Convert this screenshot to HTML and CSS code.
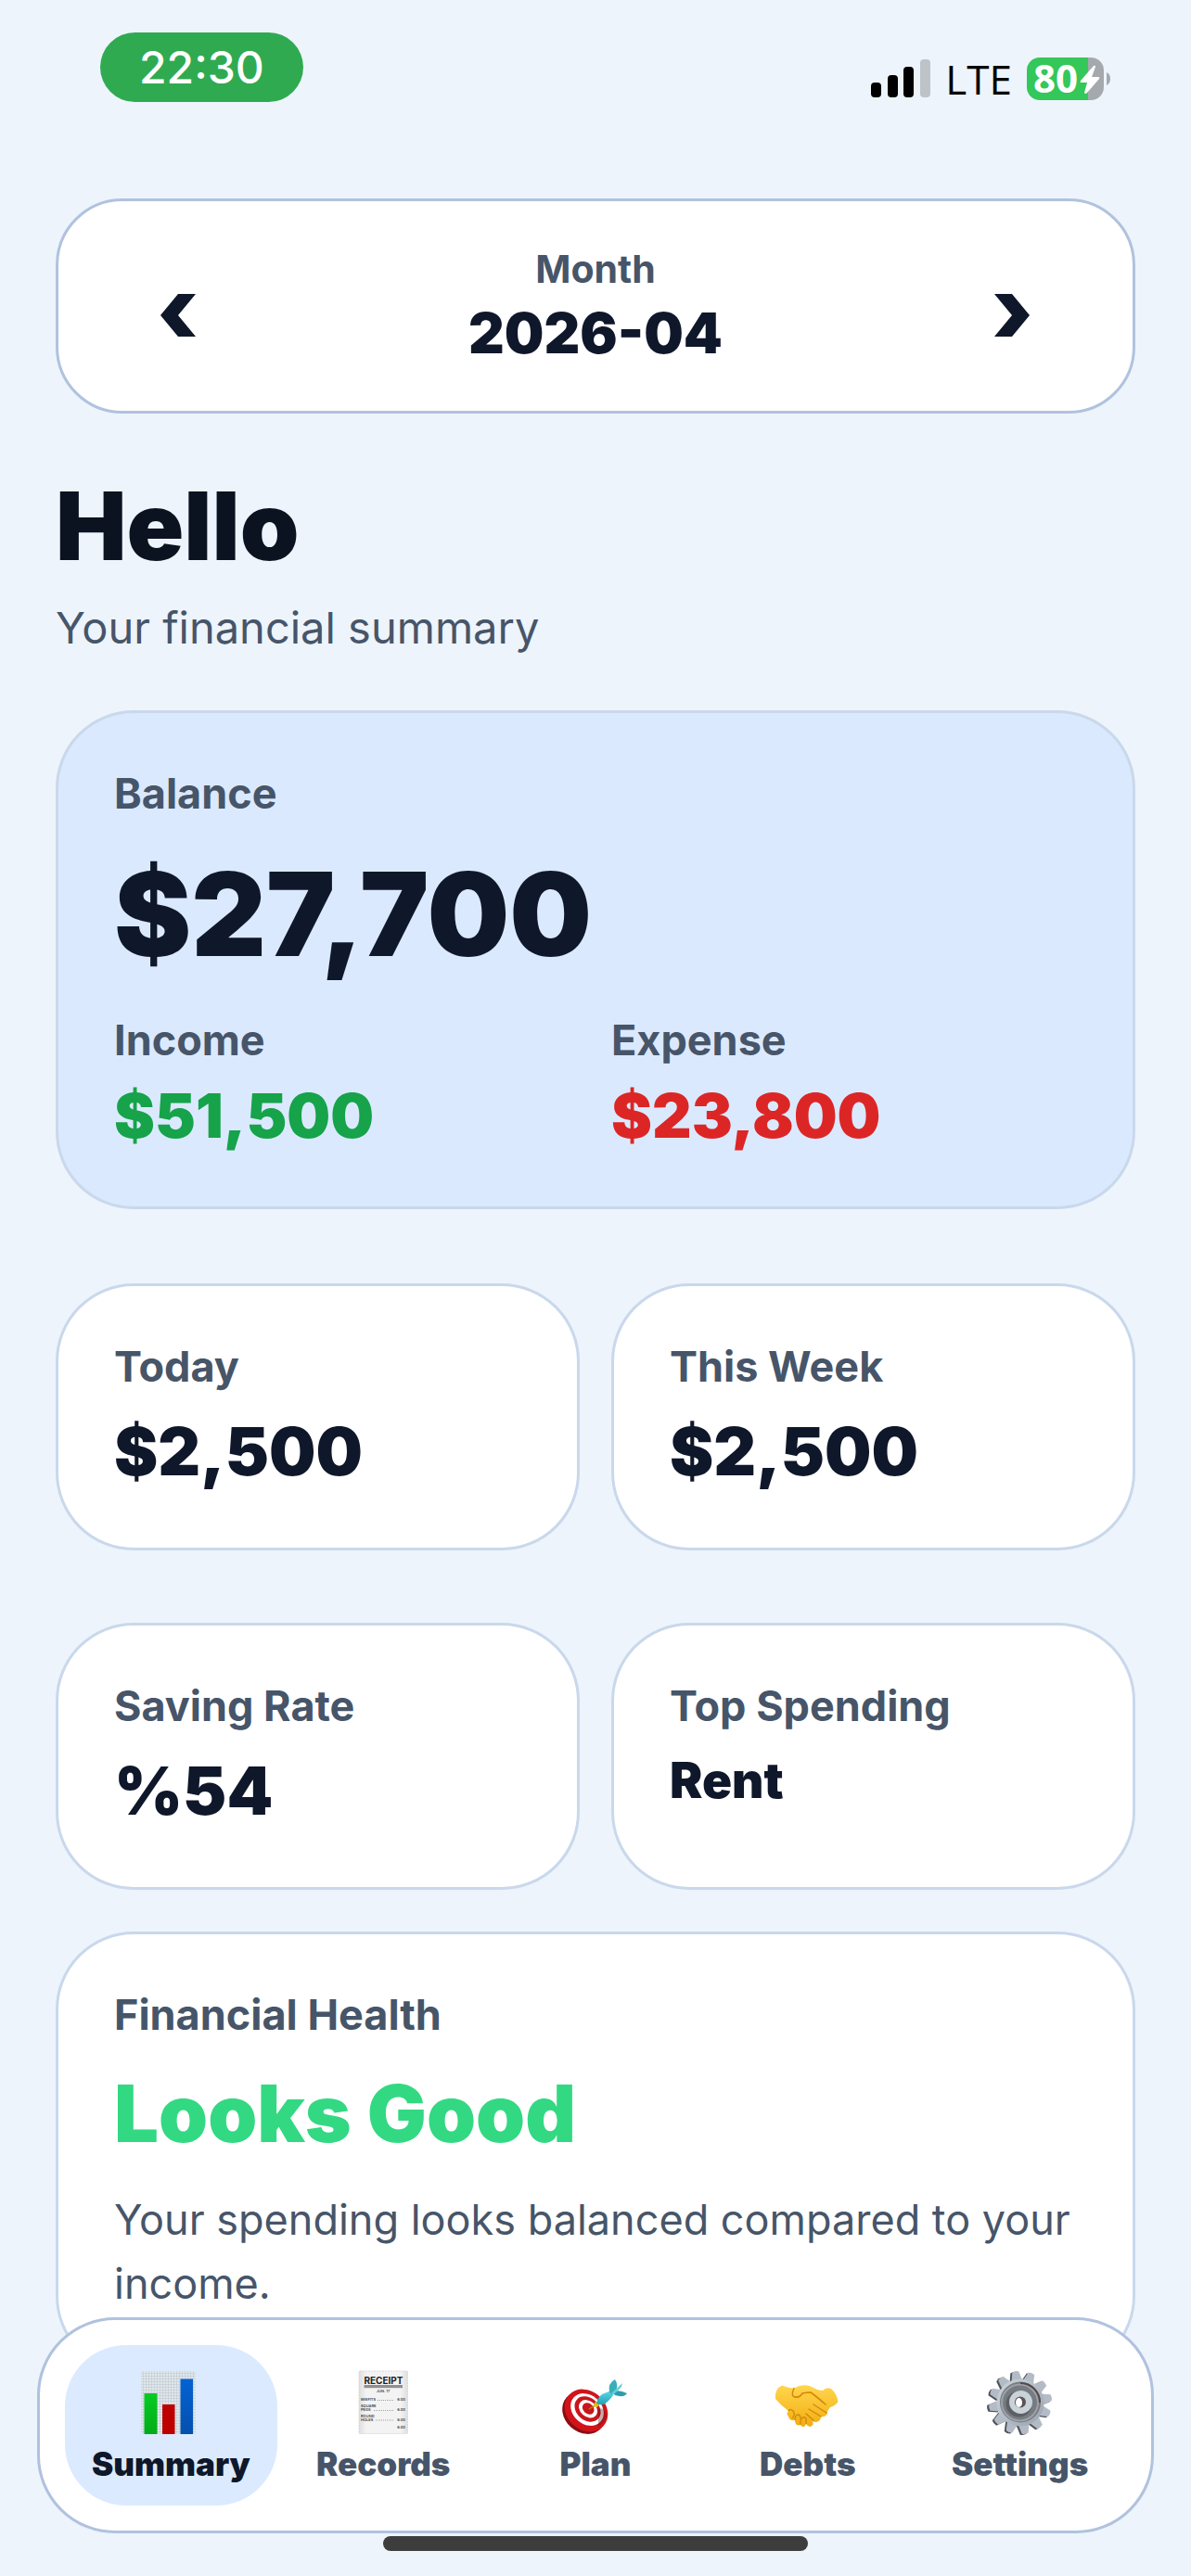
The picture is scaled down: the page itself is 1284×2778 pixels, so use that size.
FILE: index.html
```html
<!DOCTYPE html>
<html lang="en">

<head>
    <meta charset="UTF-8">
    <meta name="viewport" content="width=device-width, initial-scale=1.0">
    <title>Summary</title>
    <link rel="stylesheet" href="styles.css">
</head>

<body>
    <header class="status-bar">
        <span class="clock">22:30</span>
        <div class="status-icons">
            <svg class="signal" viewBox="0 0 64 41" aria-hidden="true">
                <rect x="0" y="25" width="11" height="16" rx="4" />
                <rect x="18" y="17" width="11" height="24" rx="4" />
                <rect x="35" y="8" width="11" height="33" rx="4" />
                <rect x="53" y="0" width="11" height="41" rx="4" fill="#bec3c8" />
            </svg>
            <span class="network">LTE</span>
            <svg class="battery" viewBox="0 0 90 46" role="img" aria-label="Battery 80%">
                <path d="M14 0H66V46H14A14 14 0 0 1 0 32V14A14 14 0 0 1 14 0Z" fill="#34c759" />
                <path d="M66 0H69A14 14 0 0 1 83 14V32A14 14 0 0 1 69 46H66Z" fill="#a5a9ae" />
                <path d="M86 16Q90 18 90 23Q90 28 86 30Z" fill="#a5a9ae" />
                <text x="7" y="38" class="battery-level">80</text>
                <path d="M72 9L58 25Q57 27 59 27H65L62 38Q63 40 65 38L78 23Q79 21 77 21H70L74 10Q74 8 72 9Z" fill="#fff" />
            </svg>
        </div>
    </header>

    <main class="container">
        <section class="month-card">
            <button type="button" class="month-button" aria-label="Previous month">
                <svg viewBox="0 0 132 132"><path d="M66 52H85L66 75L85 98H66L47 75Z" /></svg>
            </button>
            <div class="month-info">
                <span class="month-label">Month</span>
                <strong class="month-value">2026-04</strong>
            </div>
            <button type="button" class="month-button" aria-label="Next month">
                <svg viewBox="0 0 132 132"><path d="M46 52H65L84 75L65 98H46L65 75Z" /></svg>
            </button>
        </section>

        <h1>Hello</h1>
        <p class="subtitle">Your financial summary</p>

        <section class="card balance-card">
            <h2 class="label">Balance</h2>
            <p class="balance">$27,700</p>
            <div class="columns">
                <div>
                    <h3 class="label">Income</h3>
                    <p class="flow income">$51,500</p>
                </div>
                <div>
                    <h3 class="label">Expense</h3>
                    <p class="flow expense">$23,800</p>
                </div>
            </div>
        </section>

        <div class="columns stats">
            <section class="card">
                <h2 class="label">Today</h2>
                <p class="amount">$2,500</p>
            </section>
            <section class="card">
                <h2 class="label">This Week</h2>
                <p class="amount">$2,500</p>
            </section>
            <section class="card">
                <h2 class="label">Saving Rate</h2>
                <p class="amount">%54</p>
            </section>
            <section class="card">
                <h2 class="label">Top Spending</h2>
                <p class="category">Rent</p>
            </section>
        </div>

        <section class="card">
            <h2 class="label">Financial Health</h2>
            <p class="health">Looks Good</p>
            <p class="health-text">Your spending looks balanced compared to your income.</p>
        </section>
    </main>

    <div class="dock">
        <nav class="tabs">
            <a href="#summary" class="tab active" aria-current="page">
                <svg viewBox="0 0 72 72" aria-hidden="true">
                    <defs>
                        <pattern id="grid" width="3" height="3" patternUnits="userSpaceOnUse">
                            <rect width="3" height="3" fill="#dfe7ec" />
                            <path d="M0 0H3M0 0V3" stroke="#bcc6cd" stroke-width="1" />
                        </pattern>
                        <linearGradient id="green" x2="0" y2="1">
                            <stop stop-color="#06cc24" />
                            <stop offset="1" stop-color="#02ab18" />
                        </linearGradient>
                        <linearGradient id="blue" x2="0" y2="1">
                            <stop stop-color="#0562d3" />
                            <stop offset="1" stop-color="#0450ad" />
                        </linearGradient>
                    </defs>
                    <rect x="4" y="1" width="59" height="68" fill="url(#grid)" />
                    <rect x="7.5" y="25" width="14" height="44" fill="url(#green)" />
                    <rect x="27" y="37" width="13.5" height="32" fill="#bd0000" />
                    <rect x="46.5" y="9.5" width="13.5" height="59.5" fill="url(#blue)" />
                </svg>
                <span>Summary</span>
            </a>
            <a href="#records" class="tab">
                <svg viewBox="0 0 72 72" class="receipt" aria-hidden="true">
                    <defs>
                        <linearGradient id="paper">
                            <stop stop-color="#dedede" />
                            <stop offset=".15" stop-color="#f3f3f3" />
                            <stop offset=".85" stop-color="#f3f3f3" />
                            <stop offset="1" stop-color="#dedede" />
                        </linearGradient>
                    </defs>
                    <rect x="10" y="1" width="52.5" height="67.5" rx="1" fill="url(#paper)" stroke="#d2d2d2" stroke-width=".8" stroke-dasharray="2 1" />
                    <text x="36.5" y="14.5" text-anchor="middle" class="receipt-title">RECEIPT</text>
                    <rect x="15.5" y="16" width="41.5" height="3.2" fill="#8f8f8f" />
                    <text x="36" y="24" text-anchor="middle">JUN. 17</text>
                    <text x="12" y="33">MISFITS</text>
                    <text x="12" y="40">SQUARE</text>
                    <text x="12" y="44">PEGS</text>
                    <text x="12" y="50.5">ROUND</text>
                    <text x="12" y="54.5">HOLES</text>
                    <text x="60" y="33" text-anchor="end">6.00</text>
                    <text x="60" y="44" text-anchor="end">6.00</text>
                    <text x="60" y="54.5" text-anchor="end">6.00</text>
                    <text x="60" y="62.5" text-anchor="end">6.00</text>
                    <path d="M30 32.5H48M26 43.5H48M28 54H48" stroke="#8a8a8a" stroke-width=".8" stroke-dasharray="1 1" />
                </svg>
                <span>Records</span>
            </a>
            <a href="#plan" class="tab">
                <svg viewBox="0 0 72 72" aria-hidden="true">
                    <defs>
                        <linearGradient id="dart" x2="0" y2="1">
                            <stop stop-color="#5fd9e6" />
                            <stop offset="1" stop-color="#1fa3b5" />
                        </linearGradient>
                    </defs>
                    <ellipse cx="23.5" cy="46" rx="25" ry="21" transform="rotate(42 23.5 46)" fill="#8c0d12" />
                    <ellipse cx="26" cy="43.5" rx="25" ry="21" transform="rotate(42 26 43.5)" fill="#d1141b" />
                    <ellipse cx="27" cy="42.5" rx="19.5" ry="15.5" transform="rotate(42 27 42.5)" fill="#fff" />
                    <ellipse cx="27.5" cy="42" rx="15.5" ry="12" transform="rotate(42 27.5 42)" fill="#c9151b" />
                    <ellipse cx="28" cy="41.8" rx="11" ry="8.5" transform="rotate(42 28 41.8)" fill="#fff" />
                    <ellipse cx="28.2" cy="41.5" rx="7" ry="5.5" transform="rotate(42 28.2 41.5)" fill="#c9151b" />
                    <path d="M39 42Q46 39 48 50Q45 57 39 61Z" fill="#5c1013" opacity=".35" />
                    <path d="M29 42L37 37" stroke="#a67a08" stroke-width="1.5" />
                    <path d="M33 39L36 34L40 37L38 40Z" fill="#e9bd16" />
                    <path d="M37 36Q38 30 43 26L53 22Q56 23 55 27Q50 34 45 37Q40 38 37 36Z" fill="url(#dart)" />
                    <path d="M51 24Q49 14 57 10Q61 16 58 22L54 26Z" fill="#3aafbb" />
                    <path d="M54 24Q60 20 70 25Q67 30 57 27Z" fill="#2c9eab" />
                    <path d="M53 25L65 14L64 18L56 26Z" fill="#62cfd8" />
                </svg>
                <span>Plan</span>
            </a>
            <a href="#debts" class="tab">
                <svg viewBox="0 0 72 72" aria-hidden="true">
                    <defs>
                        <linearGradient id="skin" x2="0" y2="1">
                            <stop stop-color="#ffd64d" />
                            <stop offset="1" stop-color="#f2ad10" />
                        </linearGradient>
                    </defs>
                    <path d="M1 31Q0 20 8 16.5Q14 19 21 19.5Q30 14 39 17.5Q47 22 52 22Q56 18 61 20Q67 25 68.5 34Q66 38 60 40Q57 43 56.5 48Q53 51 50 50Q50 55 45 56Q42 56 41 55Q43 60 38 61Q35 60 34 58Q32 64 28 59Q22 61 22 54Q16 55 15 50Q12 47 15 44Q7 38 1 31Z" fill="url(#skin)" />
                    <path d="M15 44Q17 41 20 44Q23 48 19 52M22 54Q22 48 26 48Q29 49 28 59M29 53Q31 49 34 52V58" fill="none" stroke="#d58a0b" stroke-width="1.4" />
                    <path d="M22 29Q27 30 30 25Q34 24 39 24Q46 29 55 37" fill="none" stroke="#d3870b" stroke-width="1.6" stroke-linecap="round" />
                    <path d="M21 19.5Q17 28 22 29M42 37L56 46M37 42L50 50M34 47L42 54" fill="none" stroke="#d3870b" stroke-width="1.4" stroke-linecap="round" />
                </svg>
                <span>Debts</span>
            </a>
            <a href="#settings" class="tab">
                <svg viewBox="0 0 72 72" aria-hidden="true">
                    <defs>
                        <linearGradient id="steel" x2="1" y2="1">
                            <stop stop-color="#cdd6dc" />
                            <stop offset="1" stop-color="#9ba2b0" />
                        </linearGradient>
                        <path id="tooth" d="M30 12L32.5 1.5Q36 0 39.5 1.5L42 12Z" />
                        <g id="teeth">
                            <use href="#tooth" transform="rotate(-9 36 35)" />
                            <use href="#tooth" transform="rotate(21 36 35)" />
                            <use href="#tooth" transform="rotate(51 36 35)" />
                            <use href="#tooth" transform="rotate(81 36 35)" />
                            <use href="#tooth" transform="rotate(111 36 35)" />
                            <use href="#tooth" transform="rotate(141 36 35)" />
                            <use href="#tooth" transform="rotate(171 36 35)" />
                            <use href="#tooth" transform="rotate(201 36 35)" />
                            <use href="#tooth" transform="rotate(231 36 35)" />
                            <use href="#tooth" transform="rotate(261 36 35)" />
                            <use href="#tooth" transform="rotate(291 36 35)" />
                            <use href="#tooth" transform="rotate(321 36 35)" />
                        </g>
                    </defs>
                    <use href="#teeth" x="-2" y="1" fill="#4f535a" />
                    <use href="#teeth" fill="#b3bcc6" />
                    <circle cx="36" cy="35" r="25.5" fill="url(#steel)" />
                    <circle cx="36" cy="34.5" r="22" fill="#777c82" />
                    <circle cx="35.5" cy="35" r="19.5" fill="none" stroke="#9ca2a8" stroke-width="2" />
                    <path d="M36 14A21 21 0 0 1 57 35" fill="none" stroke="#55494a" stroke-width="2" />
                    <circle cx="34.5" cy="36.5" r="14" fill="#5d5f64" />
                    <circle cx="36.5" cy="34.5" r="12.5" fill="#c9d2d9" />
                    <circle cx="36" cy="34.5" r="6" fill="#5b5356" />
                    <ellipse cx="34.5" cy="35" rx="3.5" ry="5" fill="#fff" />
                </svg>
                <span>Settings</span>
            </a>
        </nav>
        <div class="home-indicator"></div>
    </div>
</body>

</html>
```

FILE: styles.css
```css
* {
    box-sizing: border-box;
}

body {
    font-family: Inter, "Liberation Sans", sans-serif;
    color: #0f172a;
    background-color: #edf4fc;
    margin: 0;
}

h1, h2, h3, p {
    margin: 0;
}

.status-bar {
    display: flex;
    justify-content: space-between;
    align-items: flex-end;
    padding: 35px 87px 104px 108px;
}

.clock {
    padding: 0 42px;
    font-size: 48px;
    font-weight: 500;
    line-height: 75px;
    color: white;
    background-color: #30aa50;
    border-radius: 38px;
}

.status-icons {
    display: flex;
    align-items: center;
    gap: 16px;
    height: 51px;
}

.signal {
    width: 64px;
    height: 41px;
}

.network {
    font-family: "Open Sans", sans-serif;
    font-size: 44px;
    font-weight: 500;
    color: black;
}

.battery {
    width: 90px;
    height: 46px;
    overflow: visible;
}

.battery-level {
    font-family: "Open Sans", sans-serif;
    font-size: 42px;
    font-weight: 700;
    fill: white;
}

.container {
    padding: 0 60px 218px;
}

.month-card {
    display: flex;
    justify-content: space-between;
    padding: 48px 63px 46px;
    background-color: white;
    border: 3px solid #b0c2de;
    border-radius: 72px;
}

.month-button {
    width: 132px;
    height: 132px;
    padding: 0;
    background: none;
    border: none;
    fill: #0f172a;
}

.month-button svg {
    display: block;
}

.month-info {
    display: flex;
    flex-direction: column;
    gap: 6px;
    text-align: center;
}

.month-label {
    font-size: 41px;
    font-weight: 700;
    line-height: 51px;
    color: #475569;
}

.month-value {
    font-size: 60px;
    font-weight: 900;
    line-height: 75px;
}

h1 {
    margin-top: 61px;
    font-size: 102px;
    font-weight: 900;
    line-height: 120px;
    color: #0b1220;
}

.subtitle {
    margin: 20px 0 59px;
    font-size: 47px;
    line-height: 60px;
    color: #475569;
}

.card {
    padding: 57px 60px 60px;
    background-color: white;
    border: 3px solid #c9d8eb;
    border-radius: 84px;
}

.balance-card {
    background-color: #dbe9fe;
}

.label {
    font-size: 45px;
    font-weight: 700;
    line-height: 60px;
    color: #475569;
}

.balance {
    margin: 25px 0 31px;
    font-size: 125px;
    font-weight: 900;
    line-height: 150px;
}

.columns {
    display: grid;
    grid-template-columns: 1fr 1fr;
    column-gap: 34px;
}

.flow {
    margin-top: 14px;
    font-size: 66px;
    font-weight: 900;
    line-height: 75px;
}

.income {
    color: #16a34a;
}

.expense {
    color: #dc2626;
}

.stats {
    row-gap: 78px;
    margin: 80px 0 45px;
}

.amount {
    margin-top: 18px;
    font-size: 71px;
    font-weight: 900;
    line-height: 87px;
}

.category {
    margin-top: 18px;
    font-size: 53px;
    font-weight: 900;
    line-height: 64px;
}

.health {
    margin: 26px 0 28px;
    font-size: 85px;
    font-weight: 900;
    line-height: 102px;
    color: #32d982;
}

.health-text {
    font-size: 45px;
    line-height: 69px;
    color: #475569;
}

.dock {
    position: fixed;
    left: 40px;
    right: 40px;
    bottom: 27px;
}

.tabs {
    display: flex;
    padding: 27px;
    background-color: white;
    border: 3px solid #b0c2de;
    border-radius: 84px;
}

.tab {
    display: flex;
    flex: 1 1 0;
    flex-direction: column;
    align-items: center;
    gap: 8px;
    padding: 27px 0 24px;
    font-size: 35px;
    font-weight: 900;
    line-height: 42px;
    color: #475569;
    text-decoration: none;
    border-radius: 66px;
}

.tab svg {
    width: 72px;
    height: 72px;
}

.active {
    color: #0f172a;
    background-color: #dbeafe;
}

.receipt {
    font-size: 4px;
    font-weight: 600;
    fill: #444;
}

.receipt-title {
    font-size: 10px;
    font-weight: 700;
    fill: #222;
}

.home-indicator {
    width: 458px;
    height: 16px;
    margin: 3px auto 0;
    background-color: #3d3d3d;
    border-radius: 8px;
}
```
